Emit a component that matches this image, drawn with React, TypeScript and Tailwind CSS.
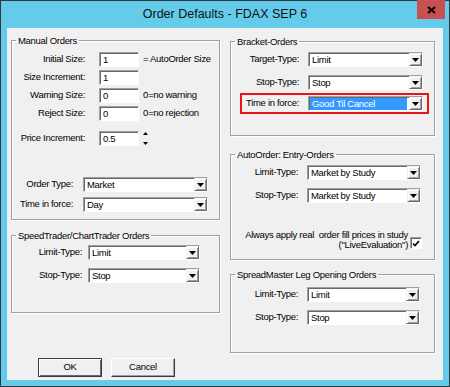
import type { ReactNode } from "react";

// Windows-classic style "Order Defaults" dialog

function Arrow() {
  return (
    <div className="flex h-full w-[13px] shrink-0 items-center justify-center border border-t-[#f0f0f0] border-l-[#f0f0f0] border-r-[#696969] border-b-[#696969] bg-[#f0f0f0] shadow-[inset_1px_1px_0_#fff,inset_-1px_-1px_0_#a0a0a0]">
      <svg width="7" height="4" viewBox="0 0 7 4">
        <polygon points="0,0 7,0 3.5,4" fill="#000" />
      </svg>
    </div>
  );
}

function Combo({ value, w, selected }: { value: string; w: string; selected?: boolean }) {
  return (
    <div className={`flex h-[15px] shrink-0 border border-[#a0a0a0] border-b-white border-r-white bg-white shadow-[inset_1px_1px_0_#696969] ${w}`}>
      <div className="flex min-w-0 flex-1 items-center pl-px pr-[2px] pt-px">
        {selected ? (
          <span className="flex h-[12px] w-full items-center bg-[#3399ff] pl-[2px] leading-none text-white">{value}</span>
        ) : (
          <span className="pl-[2px] leading-none">{value}</span>
        )}
      </div>
      <Arrow />
    </div>
  );
}

function Edit({ value }: { value: string }) {
  return (
    <div className="flex h-[15px] w-[40px] shrink-0 items-center border border-[#a0a0a0] border-b-white border-r-white bg-white pl-[3px] pt-px leading-none shadow-[inset_1px_1px_0_#696969]">
      {value}
    </div>
  );
}

function Group({ title, h, className = "", children }: { title: string; h: string; className?: string; children: ReactNode }) {
  return (
    <fieldset className={`border border-[#a0a0a0] shadow-[inset_1px_1px_0_#fff,1px_1px_0_#fff] ${h} ${className}`}>
      <legend className="ml-[4px] px-[2px] leading-[13px]">{title}</legend>
      {children}
    </fieldset>
  );
}

function ComboRow({ label, lw, gap, value, w, className = "" }: { label: string; lw: string; gap: string; value: string; w: string; className?: string }) {
  return (
    <div className={`flex items-center ${className}`}>
      <span className={`shrink-0 text-right ${lw} ${gap}`}>{label}</span>
      <Combo value={value} w={w} />
    </div>
  );
}

function EditRow({ label, value, note, className = "" }: { label: string; value: string; note?: string; className?: string }) {
  return (
    <div className={`flex items-center ${className}`}>
      <span className="mr-[14px] w-[73px] shrink-0 text-right">{label}</span>
      <Edit value={value} />
      {note && <span className="ml-[4px]">{note}</span>}
    </div>
  );
}

function Spinner() {
  return (
    <div className="ml-[3px] flex h-[17px] w-[7px] flex-col items-center justify-between py-[2px]">
      <svg width="5" height="3" viewBox="0 0 5 3">
        <polygon points="2.5,0 5,3 0,3" fill="#000" />
      </svg>
      <svg width="5" height="3" viewBox="0 0 5 3">
        <polygon points="0,0 5,0 2.5,3" fill="#000" />
      </svg>
    </div>
  );
}

export default function App() {
  return (
    <div className="h-[387px] w-[450px] whitespace-nowrap border border-[#2f3a40] bg-[#64cbeb] px-[6px] pb-[6px] font-['Liberation_Sans',Arial,sans-serif] text-[9.5px] tracking-[-0.3px] text-black">
      {/* Title bar */}
      <div className="relative h-[27px]">
        <div className="pt-[5px] text-center text-[12.5px] leading-[16px] tracking-normal text-[#111]">
          Order Defaults - FDAX SEP 6
        </div>
        <button className="absolute right-[-2px] top-[-1px] flex h-[19px] w-[28px] items-center justify-center bg-[#c75050]">
          <svg width="9" height="8" viewBox="0 0 9 8">
            <path d="M1 1 L8 7 M8 1 L1 7" stroke="#000" strokeWidth="2" />
          </svg>
        </button>
      </div>

      {/* Client area */}
      <div className="h-[352px] bg-[#f0f0f0] pl-[4px] pt-[6px]">
        <div className="flex gap-[10px]">
          {/* Left column */}
          <div className="flex w-[209px] flex-col">
            <Group title="Manual Orders" h="h-[186px]">
              <div className="flex flex-col pt-[5px]">
                <EditRow label="Initial Size:" value="1" note="= AutoOrder Size" />
                <EditRow label="Size Increment:" value="1" className="mt-[3px]" />
                <EditRow label="Warning Size:" value="0" note="0=no warning" className="mt-[3px]" />
                <EditRow label="Reject Size:" value="0" note="0=no rejection" className="mt-[3px]" />
                <div className="mt-[9px] flex items-center">
                  <span className="mr-[14px] w-[73px] shrink-0 text-right">Price Increment:</span>
                  <Edit value="0.5" />
                  <Spinner />
                </div>
                <ComboRow label="Order Type:" lw="w-[61px]" gap="mr-[10px]" value="Market" w="w-[125px]" className="mt-[30px]" />
                <ComboRow label="Time in force:" lw="w-[61px]" gap="mr-[10px]" value="Day" w="w-[125px]" className="mt-[5px]" />
              </div>
            </Group>
            <Group title="SpeedTrader/ChartTrader Orders" h="h-[84px]" className="mt-[9px]">
              <div className="flex flex-col pt-[3px]">
                <ComboRow label="Limit-Type:" lw="w-[70px]" gap="mr-[6px]" value="Limit" w="w-[112px]" />
                <ComboRow label="Stop-Type:" lw="w-[70px]" gap="mr-[6px]" value="Stop" w="w-[112px]" className="mt-[8px]" />
              </div>
            </Group>
          </div>

          {/* Right column */}
          <div className="mt-px flex w-[205px] flex-col">
            <Group title="Bracket-Orders" h="h-[101px]">
              <div className="flex flex-col pt-[4px]">
                <ComboRow label="Target-Type:" lw="w-[68px]" gap="mr-[9px]" value="Limit" w="w-[115px]" />
                <ComboRow label="Stop-Type:" lw="w-[68px]" gap="mr-[9px]" value="Stop" w="w-[115px]" className="mt-[8px]" />
                <div className="ml-[9px] mt-[3px] flex w-[189px] items-center border-2 border-[#e8141c] py-px pr-[4px]">
                  <span className="mr-[9px] w-[57px] shrink-0 text-right">Time in force:</span>
                  <Combo value="Good Til Cancel" w="w-[115px]" selected />
                </div>
              </div>
            </Group>
            <Group title="AutoOrder: Entry-Orders" h="h-[112px]" className="mt-[12px]">
              <div className="flex flex-col pt-[4px]">
                <ComboRow label="Limit-Type:" lw="w-[67px]" gap="mr-[9px]" value="Market by Study" w="w-[114px]" />
                <ComboRow label="Stop-Type:" lw="w-[67px]" gap="mr-[9px]" value="Market by Study" w="w-[114px]" className="mt-[8px]" />
                <div className="mt-[27px] flex items-center justify-end pr-[12px]">
                  <div className="mr-[2px] text-right leading-[10px]">
                    <div>Always apply real&nbsp; order fill prices in study</div>
                    <div>("LiveEvaluation")</div>
                  </div>
                  <div className="mt-[6px] flex h-[12px] w-[12px] items-center justify-center border border-[#a0a0a0] border-b-white border-r-white bg-white shadow-[inset_1px_1px_0_#696969]">
                    <svg width="8" height="7" viewBox="0 0 8 7">
                      <path d="M1 3.5 L3 5.5 L7 1" stroke="#000" strokeWidth="1.6" fill="none" />
                    </svg>
                  </div>
                </div>
              </div>
            </Group>
            <Group title="SpreadMaster Leg Opening Orders" h="h-[85px]" className="mt-[8px]">
              <div className="flex flex-col pt-[6px]">
                <ComboRow label="Limit-Type:" lw="w-[67px]" gap="mr-[9px]" value="Limit" w="w-[113px]" />
                <ComboRow label="Stop-Type:" lw="w-[67px]" gap="mr-[9px]" value="Stop" w="w-[113px]" className="mt-[8px]" />
              </div>
            </Group>
          </div>
        </div>

        {/* Buttons */}
        <div className="mt-[5px] flex gap-[9px] pl-[27px]">
          <button className="h-[19px] w-[64px] border border-[#3c3c3c] bg-[#f0f0f0] shadow-[inset_1px_1px_0_#fff,inset_-1px_-1px_0_#696969]">
            OK
          </button>
          <button className="h-[19px] w-[64px] border border-t-white border-l-white border-r-[#3c3c3c] border-b-[#3c3c3c] bg-[#f0f0f0] shadow-[inset_-1px_-1px_0_#a0a0a0]">
            Cancel
          </button>
        </div>
      </div>
    </div>
  );
}
